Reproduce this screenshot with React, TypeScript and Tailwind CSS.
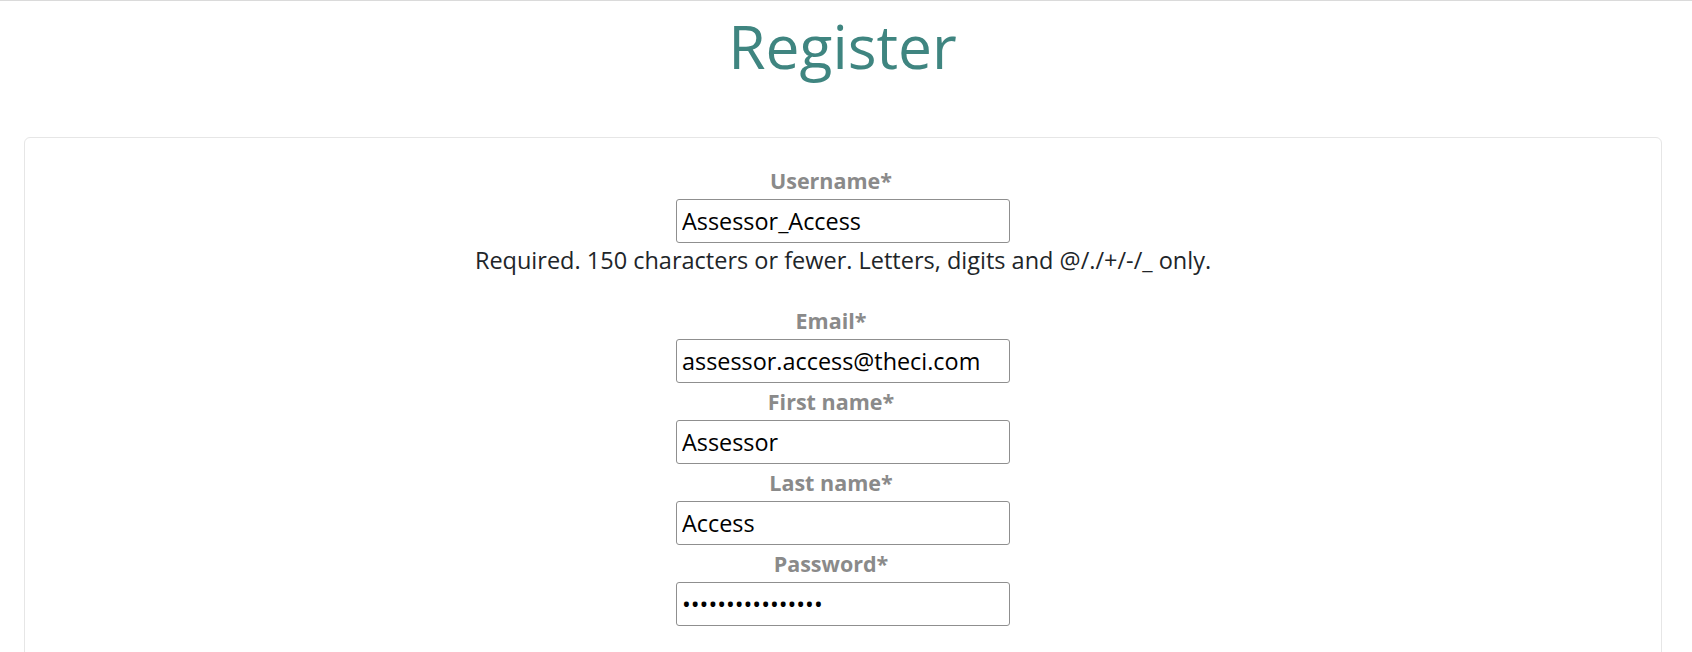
import React from "react";

const fields = [
	{ label: "Username", value: "Assessor_Access", type: "text", help: "Required. 150 characters or fewer. Letters, digits and @/./+/-/_ only." },
	{ label: "Email", value: "assessor.access@theci.com", type: "email" },
	{ label: "First name", value: "Assessor", type: "text" },
	{ label: "Last name", value: "Access", type: "text" },
	{ label: "Password", value: "assessoraccess12", type: "password" },
];

export default function App() {
	return (
		<main className="min-h-[652px] bg-white border-t border-[#dadada] font-['Open_Sans',sans-serif] overflow-hidden">
			<h1 className="text-center text-[60.5px] leading-[80px] mt-[5px] pr-[7px] text-[#3f8580] font-normal">Register</h1>
			<section className="ml-[24px] mr-[30px] mt-[51px] h-[600px] border border-[#e6e6e6] rounded-[6px] pt-[24px]">
				<form className="flex flex-col items-center">
					{fields.map((f) => (
						<div key={f.label} className="flex flex-col items-center">
							<label className="h-[37px] leading-[37px] pr-[24px] text-[21.5px] font-bold text-[#8a8a8a]">
								{f.label}*
							</label>
							<input
								type={f.type}
								defaultValue={f.value}
								readOnly
								className="w-[334px] h-[44px] border border-[#8f8f8f] rounded-[3px] px-[5px] text-[23.4px] text-black outline-none"
							/>
							{f.help && (
								<p className="mt-[2px] mb-[27px] leading-[30px] text-[23.5px] text-[#212529]">{f.help}</p>
							)}
						</div>
					))}
				</form>
			</section>
		</main>
	);
}
